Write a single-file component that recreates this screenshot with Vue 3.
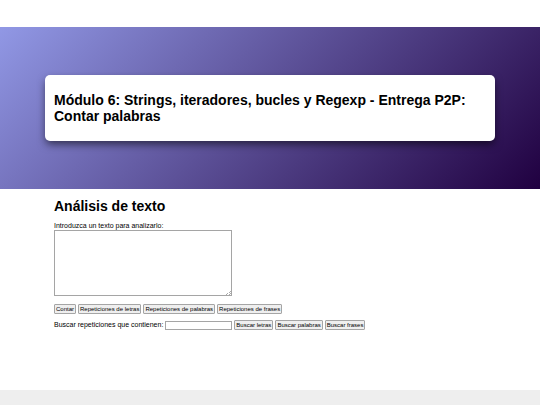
<script setup>
import { ref } from 'vue'

const texto = ref('')
const busqueda = ref('')
const acciones = ['Contar', 'Repeticiones de letras', 'Repeticiones de palabras', 'Repeticiones de frases']
const busquedas = ['Buscar letras', 'Buscar palabras', 'Buscar frases']
</script>

<template>
  <div class="pagina">
    <header class="cabecera">
      <div class="tarjeta">
        <h1>Módulo 6: Strings, iteradores, bucles y Regexp - Entrega P2P: Contar palabras</h1>
      </div>
    </header>

    <main class="contenido">
      <h1>Análisis de texto</h1>
      <label for="texto">Introduzca un texto para analizarlo:</label>
      <textarea id="texto" v-model="texto"></textarea>
      <div class="fila">
        <button v-for="accion in acciones" :key="accion" type="button">{{ accion }}</button>
      </div>
      <div class="fila">
        <label for="busqueda">Buscar repeticiones que contienen:</label>
        <input id="busqueda" v-model="busqueda" type="text">
        <button v-for="accion in busquedas" :key="accion" type="button">{{ accion }}</button>
      </div>
    </main>

    <footer class="pie"></footer>
  </div>
</template>

<style>
body {
  margin: 0;
  background: #fff;
}
</style>

<style scoped>
.pagina {
  display: flex;
  flex-direction: column;
  min-height: 100vh;
  box-sizing: border-box;
  padding-top: 27px;
  font-family: Arial, "Liberation Sans", sans-serif;
  font-size: 7px;
  line-height: 8px;
  color: #000;
}

h1 {
  margin: 0;
  font-size: 14px;
  line-height: 16px;
}

.cabecera {
  padding: 48px 45px;
  background: linear-gradient(135deg, #9198e5, #200040);
}

.tarjeta {
  padding: 17px 9px;
  border-radius: 5px;
  background: #fff;
  box-shadow: 0 4px 9px -1px rgba(0, 0, 0, 0.6);
}

.contenido {
  flex: 1;
  padding: 9px 54px;
}

.contenido h1 {
  margin-bottom: 8px;
}

textarea {
  display: block;
  box-sizing: border-box;
  width: 178px;
  height: 66px;
  margin-bottom: 8px;
  padding: 1px;
  border: 1px solid #a5a5a5;
  font-size: 7px;
}

textarea::-webkit-resizer {
  background: linear-gradient(135deg, transparent 50%, #aaa 50%, #aaa 60%, transparent 60%, transparent 75%, #aaa 75%, #aaa 85%, transparent 85%) no-repeat right bottom / 5px 5px;
}

.fila {
  display: flex;
  align-items: center;
  gap: 2px;
  margin-bottom: 6px;
}

input {
  box-sizing: border-box;
  width: 67px;
  height: 9px;
  padding: 0 1px;
  border: 1px solid #a5a5a5;
  font-size: 6px;
}

button {
  box-sizing: border-box;
  height: 10px;
  padding: 0 1px;
  border: 1px solid #a5a5a5;
  border-radius: 1px;
  background: #efefef;
  color: #000;
  font-family: inherit;
  font-size: 6px;
  line-height: 8px;
}

.pie {
  height: 15px;
  background: #eee;
}
</style>
